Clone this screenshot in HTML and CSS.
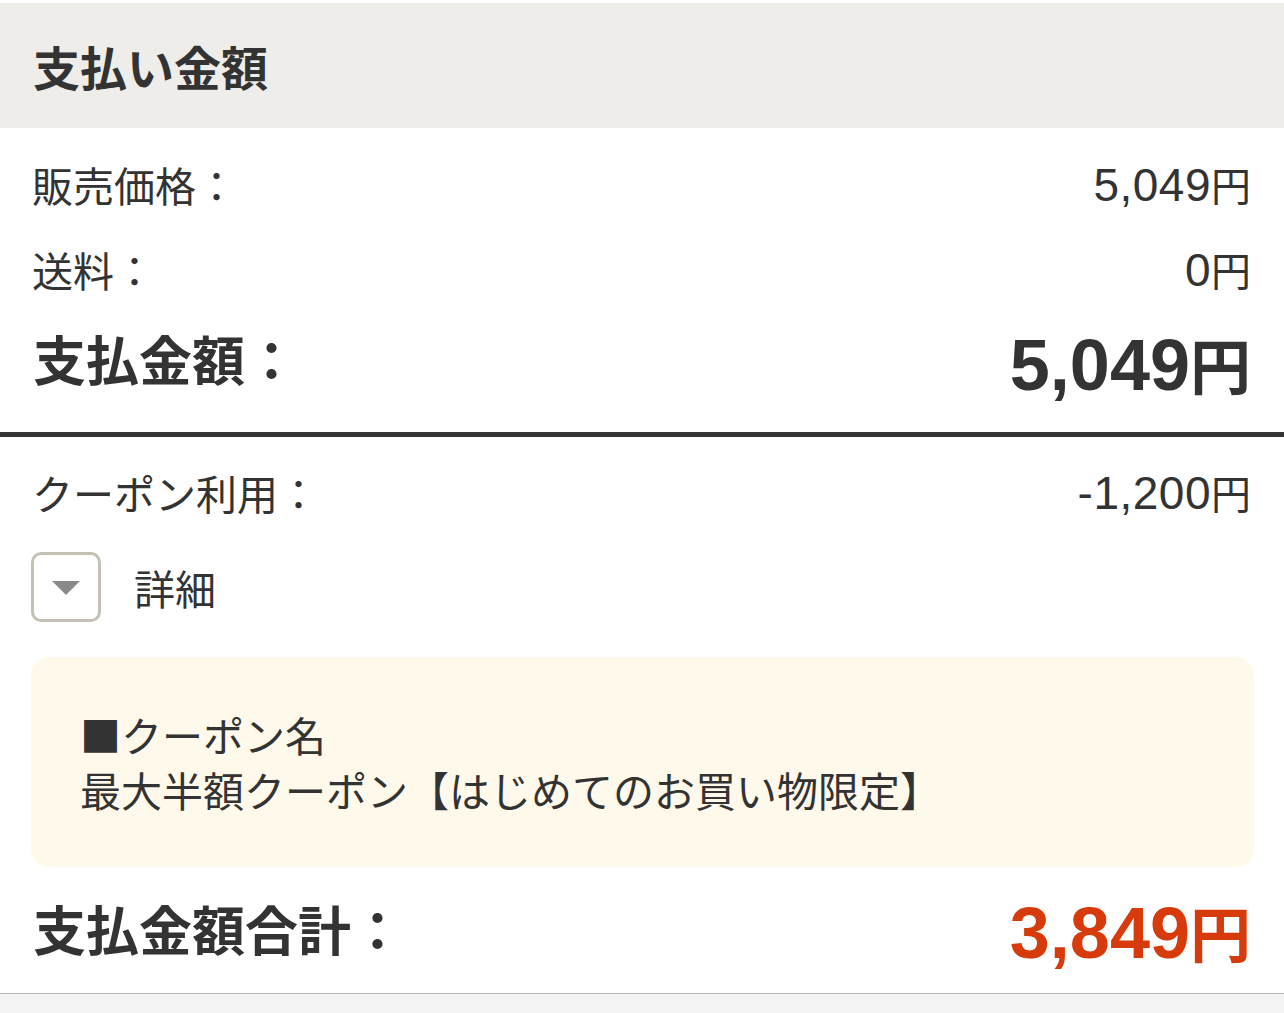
FILE: index.html
```html
<!DOCTYPE html>
<html lang="ja">
<head>
<meta charset="utf-8">
<title>支払い金額</title>
<link rel="stylesheet" href="styles.css">
</head>
<body>
<div class="page">
  <div class="header">支払い金額</div>
  <div class="summary">
    <div class="row">
      <span class="label">販売価格：</span>
      <span class="value">5,049<span class="yen">円</span></span>
    </div>
    <div class="row">
      <span class="label">送料：</span>
      <span class="value">0<span class="yen">円</span></span>
    </div>
    <div class="row row-big">
      <span class="label-big">支払金額：</span>
      <span class="value-big">5,049<span class="yen">円</span></span>
    </div>
  </div>
  <div class="divider"></div>
  <div class="coupon">
    <div class="row">
      <span class="label">クーポン利用：</span>
      <span class="value">-1,200<span class="yen">円</span></span>
    </div>
    <div class="detail-toggle">
      <span class="toggle-btn"><span class="tri"></span></span>
      <span class="detail-label">詳細</span>
    </div>
    <div class="coupon-box">
      <div class="coupon-line">■クーポン名</div>
      <div class="coupon-line">最大半額クーポン【はじめてのお買い物限定】</div>
    </div>
    <div class="row row-total">
      <span class="label-big">支払金額合計：</span>
      <span class="value-big value-red">3,849<span class="yen">円</span></span>
    </div>
  </div>
  <div class="footer"></div>
</div>
</body>
</html>
```
FILE: styles.css
```css
* { box-sizing: border-box; }
html, body {
  margin: 0;
  padding: 0;
  background: #ffffff;
}
body {
  font-family: "Noto Sans CJK JP", "Noto Sans", sans-serif;
  color: #333333;
}
.page {
  padding-top: 3px;
  display: flex;
  flex-direction: column;
  min-height: 1013px;
}
.header {
  height: 125px;
  background: #eeede9;
  padding-left: 33px;
  display: flex;
  align-items: center;
  font-size: 47px;
  font-weight: 700;
  line-height: 1;
}
.summary {
  padding: 14px 33px 20px 32px;
}
.row {
  height: 85px;
  display: flex;
  justify-content: space-between;
  align-items: center;
}
.label {
  font-size: 41px;
  line-height: 1;
  font-weight: 400;
}
.value {
  font-family: "Liberation Sans", "Noto Sans CJK JP", sans-serif;
  font-size: 46px;
  line-height: 1;
  font-weight: 400;
  letter-spacing: 0.5px;
  color: #333;
}
.yen {
  font-family: "Noto Sans CJK JP", sans-serif;
  font-size: 40px;
  letter-spacing: 0;
}
.row-big {
  height: 100px;
}
.row-big .label-big {
  margin-top: -8px;
}
.label-big {
  font-size: 53px;
  font-weight: 700;
  line-height: 1;
  padding-left: 1px;
}
.value-big {
  font-family: "Liberation Sans", "Noto Sans CJK JP", sans-serif;
  font-size: 72px;
  font-weight: 700;
  line-height: 1;
  margin-top: 6px;
}
.value-big .yen {
  font-size: 61px;
}
.value-red {
  color: #d83b0b;
}
.divider {
  height: 5px;
  background: #333333;
}
.coupon {
  padding: 13px 33px 0 32px;
}
.detail-toggle {
  margin-top: 17px;
  height: 70px;
  display: flex;
  align-items: center;
  gap: 33px;
}
.toggle-btn {
  width: 70px;
  height: 70px;
  margin-left: -1px;
  border: 3px solid #c4c0b6;
  border-radius: 10px;
  display: flex;
  align-items: center;
  justify-content: center;
}
.tri {
  width: 0;
  height: 0;
  border-left: 14px solid transparent;
  border-right: 14px solid transparent;
  border-top: 14px solid #8a8a8a;
  margin-top: 1px;
}
.detail-label {
  font-size: 41px;
  line-height: 1;
}
.coupon-box {
  margin: 35px -3px 0 -1px;
  height: 210px;
  background: #fef9ea;
  border-radius: 18px;
  padding: 50px 48px 0 49px;
}
.coupon-line {
  font-size: 41px;
  line-height: 55px;
}
.row-total {
  height: 126px;
}
.row-total .label-big {
  margin-top: -4px;
}
.footer {
  flex: 1;
  border-top: 1px solid #b5b5b5;
  background: #f3f3f3;
}
```
